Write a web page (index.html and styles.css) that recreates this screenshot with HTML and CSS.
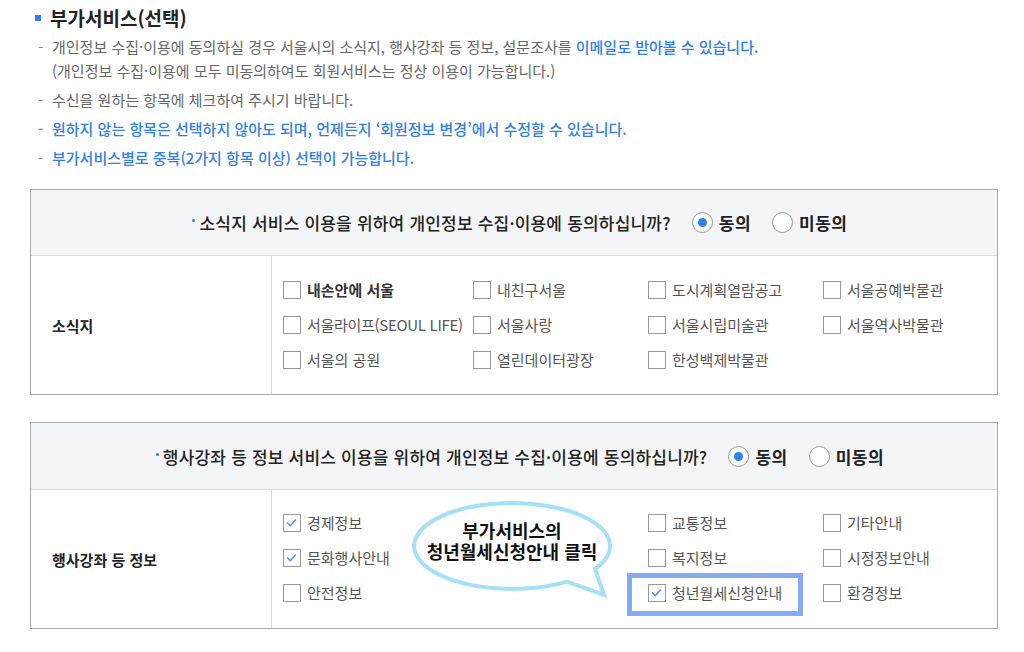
FILE: index.html
```html
<!DOCTYPE html>
<html lang="ko">
<head>
<meta charset="utf-8">
<link rel="stylesheet" href="styles.css">
</head>
<body>
<div class="page">
  <h2 class="title"><span class="sq"></span>부가서비스(선택)</h2>
  <ul class="notes">
    <li><span class="dash">-</span><span>개인정보 수집·이용에 동의하실 경우 서울시의 소식지, 행사강좌 등 정보, 설문조사를 <b class="blue">이메일로 받아볼 수 있습니다.</b><br>(개인정보 수집·이용에 모두 미동의하여도 회원서비스는 정상 이용이 가능합니다.)</span></li>
    <li><span class="dash">-</span><span>수신을 원하는 항목에 체크하여 주시기 바랍니다.</span></li>
    <li class="blue"><span class="dash">-</span><span>원하지 않는 항목은 선택하지 않아도 되며, 언제든지 ‘회원정보 변경’에서 수정할 수 있습니다.</span></li>
    <li class="blue"><span class="dash">-</span><span>부가서비스별로 중복(2가지 항목 이상) 선택이 가능합니다.</span></li>
  </ul>

  <section class="box">
    <div class="box-head">
      <span class="q"><span class="qdot"></span>소식지 서비스 이용을 위하여 개인정보 수집·이용에 동의하십니까?</span>
      <span class="radio on"></span><span class="rlabel">동의</span>
      <span class="radio"></span><span class="rlabel">미동의</span>
    </div>
    <div class="box-body">
      <div class="label">소식지</div>
      <div class="opts">
        <div class="item"><span class="cb"></span><span class="strong">내손안에 서울</span></div>
        <div class="item"><span class="cb"></span>내친구서울</div>
        <div class="item"><span class="cb"></span>도시계획열람공고</div>
        <div class="item"><span class="cb"></span>서울공예박물관</div>
        <div class="item"><span class="cb"></span><span class="tight">서울라이프(SEOUL LIFE)</span></div>
        <div class="item"><span class="cb"></span>서울사랑</div>
        <div class="item"><span class="cb"></span>서울시립미술관</div>
        <div class="item"><span class="cb"></span>서울역사박물관</div>
        <div class="item"><span class="cb"></span>서울의 공원</div>
        <div class="item"><span class="cb"></span>열린데이터광장</div>
        <div class="item"><span class="cb"></span>한성백제박물관</div>
      </div>
    </div>
  </section>

  <section class="box box2">
    <div class="box-head">
      <span class="q"><span class="qdot"></span>행사강좌 등 정보 서비스 이용을 위하여 개인정보 수집·이용에 동의하십니까?</span>
      <span class="radio on"></span><span class="rlabel">동의</span>
      <span class="radio"></span><span class="rlabel">미동의</span>
    </div>
    <div class="box-body">
      <div class="label">행사강좌 등 정보</div>
      <div class="opts">
        <div class="item"><span class="cb checked"><svg viewBox="0 0 18 18" width="16" height="16"><path d="M3.5 8.5 L7 12 L13.5 5" fill="none" stroke="#4a8fe6" stroke-width="1.6"/></svg></span>경제정보</div>
        <div class="item empty"></div>
        <div class="item"><span class="cb"></span>교통정보</div>
        <div class="item"><span class="cb"></span>기타안내</div>
        <div class="item"><span class="cb checked"><svg viewBox="0 0 18 18" width="16" height="16"><path d="M3.5 8.5 L7 12 L13.5 5" fill="none" stroke="#4a8fe6" stroke-width="1.6"/></svg></span>문화행사안내</div>
        <div class="item empty"></div>
        <div class="item"><span class="cb"></span>복지정보</div>
        <div class="item"><span class="cb"></span>시정정보안내</div>
        <div class="item"><span class="cb"></span>안전정보</div>
        <div class="item empty"></div>
        <div class="item highlight"><span class="cb checked"><svg viewBox="0 0 18 18" width="16" height="16"><path d="M3.5 8.5 L7 12 L13.5 5" fill="none" stroke="#4a8fe6" stroke-width="1.6"/></svg></span>청년월세신청안내</div>
        <div class="item"><span class="cb"></span>환경정보</div>
      </div>
    </div>
    <svg class="bubble" width="210" height="104" viewBox="0 0 210 104">
      <path d="M190 70.9 A98 43 0 1 0 162 83.6 L199 97 Z" fill="#fff" stroke="#a6dff8" stroke-width="4"/>
    </svg>
    <div class="bubble-text"><div>부가서비스의</div><div>청년월세신청안내 클릭</div></div>
  </section>
</div>
</body>
</html>
```

FILE: styles.css
```css
*, *::before, *::after { box-sizing: border-box; }
html, body { margin: 0; padding: 0; background: #fff; }
body {
  font-family: "Noto Sans CJK KR", "Noto Sans", sans-serif;
  color: #333;
}
.page { padding: 6px 26px 0 30px; }

.title {
  display: flex;
  align-items: center;
  margin: 0 0 5px 5px;
  font-size: 19px;
  line-height: 24px;
  font-weight: 700;
  color: #222;
}
.sq {
  width: 6px;
  height: 6px;
  background: #2f80e8;
  margin-right: 9px;
}

.notes {
  list-style: none;
  margin: 0 0 19px 8px;
  padding: 0;
  font-size: 15px;
  line-height: 24px;
  color: #666;
}
.notes li { display: flex; margin-bottom: 5px; }
.notes li:last-child { margin-bottom: 0; }
.dash { width: 14px; flex: none; color: #888; }
.blue { color: #2f80e8; font-weight: 500; }
b.blue { font-weight: 500; }

.box {
  position: relative;
  border: 1px solid #a9a9a9;
  margin-bottom: 27px;
}
.box-head {
  height: 66px;
  background: #f4f5f7;
  border-bottom: 1px solid #dadada;
  display: flex;
  align-items: center;
  justify-content: center;
  padding-left: 12px;
  font-size: 17px;
  font-weight: 500;
  color: #222;
}
.box2 .box-head { height: 67px; }
.q { display: flex; align-items: center; margin-right: 21px; letter-spacing: 0.2px; }
.qdot {
  width: 3px;
  height: 3px;
  border-radius: 50%;
  background: #2f80e8;
  margin-right: 4px;
  margin-top: -4px;
}
.radio {
  width: 21px;
  height: 21px;
  border-radius: 50%;
  border: 1px solid #999;
  background: #fff;
  display: flex;
  align-items: center;
  justify-content: center;
  margin-right: 6px;
}
.radio.on::after {
  content: "";
  width: 9px;
  height: 9px;
  border-radius: 50%;
  background: #2f80e8;
}
.rlabel { font-weight: 700; margin-right: 21px; letter-spacing: 0.5px; }
.rlabel:last-child { margin-right: 0; }

.box-body {
  display: flex;
  height: 138px;
}
.label {
  width: 241px;
  flex: none;
  border-right: 1px solid #dadada;
  display: flex;
  align-items: center;
  padding-left: 21px;
  font-size: 15px;
  font-weight: 700;
  color: #222;
}
.opts {
  flex: 1;
  padding: 16px 0 0 11px;
  display: grid;
  grid-template-columns: 190px 175px 175px 1fr;
  grid-auto-rows: 35px;
  align-content: start;
  font-size: 15px;
  color: #555;
}
.box2 .opts { padding-top: 15px; }
.item {
  display: flex;
  align-items: center;
  white-space: nowrap;
}
.tight { letter-spacing: -0.3px; }
.cb {
  width: 18px;
  height: 18px;
  border: 1px solid #999;
  background: #fff;
  margin-right: 6px;
  flex: none;
  display: flex;
  align-items: center;
  justify-content: center;
}
.strong { font-weight: 700; color: #333; }

.highlight { position: relative; }
.highlight::after {
  content: "";
  position: absolute;
  left: -21px;
  top: -2px;
  width: 176px;
  height: 43px;
  border: 5px solid #85abf5;
}

.bubble {
  position: absolute;
  left: 374px;
  top: 75px;
  overflow: visible;
}
.bubble-text {
  position: absolute;
  left: 381px;
  top: 97px;
  width: 200px;
  text-align: center;
  font-size: 18px;
  line-height: 21px;
  font-weight: 700;
  color: #111;
  white-space: nowrap;
}
```
